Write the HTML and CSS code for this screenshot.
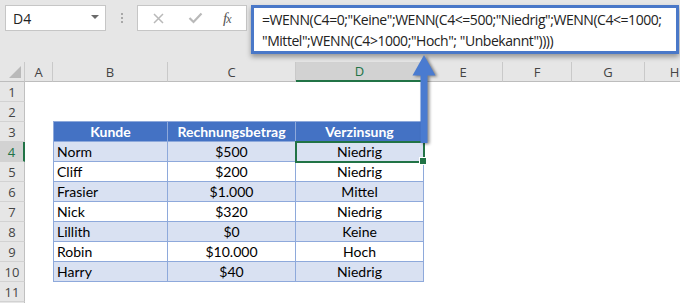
FILE: index.html
```html
<!DOCTYPE html>
<html lang="de">
<head>
<meta charset="utf-8">
<title>WENN verschachtelt</title>
<link rel="stylesheet" href="styles.css">
</head>
<body>
<div class="app">
  <div class="toolbar">
    <div class="namebox"><span class="ref">D4</span><span class="caret"></span></div>
    <div class="grip"><i></i><i></i><i></i></div>
    <div class="fxbox">
      <svg class="ico-x" width="11" height="11" viewBox="0 0 11 11"><path d="M1 1L10 10M10 1L1 10" stroke="#b9b9b9" stroke-width="1.5" fill="none"/></svg>
      <svg class="ico-ok" width="15" height="12" viewBox="0 0 15 12"><path d="M1.5 6L5.5 10L13.5 1.5" stroke="#b9b9b9" stroke-width="2.2" fill="none"/></svg>
      <span class="fx">f<span class="fxx">x</span></span>
    </div>
    <div class="formula">=WENN(C4=0;"Keine";WENN(C4&lt;=500;"Niedrig";WENN(C4&lt;=1000;<br>"Mittel";WENN(C4&gt;1000;"Hoch"; "Unbekannt"))))</div>
  </div>
  <div class="sheet">
    <div class="ch corner"><span class="tri"></span></div><div class="ch">A</div><div class="ch">B</div><div class="ch">C</div><div class="ch sel">D</div><div class="ch">E</div><div class="ch">F</div><div class="ch">G</div><div class="ch">H</div>

    <div class="rh">1</div><div class="c"></div><div class="c"></div><div class="c"></div><div class="c"></div><div class="c"></div><div class="c"></div><div class="c"></div><div class="c"></div>

    <div class="rh">2</div><div class="c"></div><div class="c edge"></div><div class="c edge"></div><div class="c edge"></div><div class="c"></div><div class="c"></div><div class="c"></div><div class="c"></div>

    <div class="rh">3</div><div class="c"></div><div class="c th first">Kunde</div><div class="c th">Rechnungsbetrag</div><div class="c th">Verzinsung</div><div class="c"></div><div class="c"></div><div class="c"></div><div class="c"></div>

    <div class="rh sel">4</div><div class="c"></div><div class="c td band first left">Norm</div><div class="c td band">$500</div><div class="c td band active">Niedrig</div><div class="c"></div><div class="c"></div><div class="c"></div><div class="c"></div>

    <div class="rh">5</div><div class="c"></div><div class="c td first left">Cliff</div><div class="c td">$200</div><div class="c td">Niedrig</div><div class="c"></div><div class="c"></div><div class="c"></div><div class="c"></div>

    <div class="rh">6</div><div class="c"></div><div class="c td band first left">Frasier</div><div class="c td band">$1.000</div><div class="c td band">Mittel</div><div class="c"></div><div class="c"></div><div class="c"></div><div class="c"></div>

    <div class="rh">7</div><div class="c"></div><div class="c td first left">Nick</div><div class="c td">$320</div><div class="c td">Niedrig</div><div class="c"></div><div class="c"></div><div class="c"></div><div class="c"></div>

    <div class="rh">8</div><div class="c"></div><div class="c td band first left">Lillith</div><div class="c td band">$0</div><div class="c td band">Keine</div><div class="c"></div><div class="c"></div><div class="c"></div><div class="c"></div>

    <div class="rh">9</div><div class="c"></div><div class="c td first left">Robin</div><div class="c td">$10.000</div><div class="c td">Hoch</div><div class="c"></div><div class="c"></div><div class="c"></div><div class="c"></div>

    <div class="rh">10</div><div class="c"></div><div class="c td band first left">Harry</div><div class="c td band">$40</div><div class="c td band">Niedrig</div><div class="c"></div><div class="c"></div><div class="c"></div><div class="c"></div>

    <div class="rh">11</div><div class="c"></div><div class="c"></div><div class="c"></div><div class="c"></div><div class="c"></div><div class="c"></div><div class="c"></div><div class="c"></div>

    <div class="rh"></div><div class="c"></div><div class="c"></div><div class="c"></div><div class="c"></div><div class="c"></div><div class="c"></div><div class="c"></div><div class="c"></div>
  </div>
  <svg class="arrow" width="680" height="303" viewBox="0 0 680 303">
    <path class="arrow-shape" d="M424 55L435.5 75.5L427.5 75.5L427.5 143L420.5 143L420.5 75.5L412.5 75.5Z"/>
  </svg>
</div>
</body>
</html>
```

FILE: styles.css
```css
* { box-sizing: border-box; }
html, body { margin: 0; padding: 0; background: #ffffff; }
body { width: 680px; height: 303px; overflow: hidden; }

.app {
  position: relative;
  width: 680px;
  height: 303px;
  overflow: hidden;
  background: #ffffff;
}

/* ---------- toolbar / formula bar ---------- */
.toolbar {
  height: 62px;
  background: #e6e6e6;
  display: flex;
  align-items: flex-start;
  padding: 5px 0 0 5px;
  font-family: "Open Sans", "Noto Sans", sans-serif;
}
.namebox {
  width: 101px;
  height: 26px;
  background: #ffffff;
  border: 1px solid #c6c6c6;
  display: flex;
  align-items: center;
  justify-content: space-between;
  padding: 0 6px 0 7px;
}
.ref { font-size: 14px; color: #222222; }
.caret {
  width: 0; height: 0;
  border-left: 4px solid transparent;
  border-right: 4px solid transparent;
  border-top: 4px solid #6a6a6a;
  margin-top: -3px;
}
.grip {
  width: 31px;
  height: 26px;
  display: flex;
  flex-direction: column;
  align-items: center;
  justify-content: center;
  gap: 2px;
}
.grip i {
  display: block;
  width: 2px; height: 2px;
  background: #a8a8a8;
}
.fxbox {
  width: 110px;
  height: 26px;
  background: #ffffff;
  border: 1px solid #c6c6c6;
  display: flex;
  align-items: center;
  padding: 0 0 0 15px;
}
.ico-x { margin-right: 24px; }
.ico-ok { margin-right: 20px; }
.fx {
  font-family: "Liberation Serif", "DejaVu Serif", serif;
  font-style: italic;
  font-size: 15px;
  color: #555555;
  letter-spacing: -1px;
}
.fxx { font-size: 12px; }

.formula {
  margin-left: 4px;
  width: 428px;
  height: 49px;
  background: #ffffff;
  border: 3px solid #4a78c8;
  box-shadow: 0 3px 5px rgba(0, 0, 0, 0.35);
  padding: 1px 0 0 8px;
  font-size: 14px;
  letter-spacing: -0.45px;
  line-height: 21px;
  color: #222222;
  white-space: nowrap;
  overflow: hidden;
  position: relative;
  z-index: 2;
}

/* ---------- sheet grid ---------- */
.sheet {
  display: grid;
  grid-template-columns: 25px 28px 115px 128px 128px 79px 69px 73px 60px;
  grid-auto-rows: 20px;
  font-family: "Lato", "Open Sans", sans-serif;
}
.ch {
  background: #e6e6e6;
  border-right: 1px solid #c9c9c9;
  border-bottom: 1px solid #bdbdbd;
  display: flex;
  align-items: center;
  justify-content: center;
  font-family: "Open Sans", "Noto Sans", sans-serif;
  font-size: 13px;
  color: #444444;
}
.ch.sel {
  background: #d2d2d2;
  color: #217346;
  border-bottom: 2px solid #217346;
}
.corner { justify-content: flex-end; align-items: flex-end; padding: 0 3px 3px 0; }
.tri {
  width: 0; height: 0;
  border-left: 12px solid transparent;
  border-bottom: 12px solid #b9b9b9;
}
.rh {
  background: #e6e6e6;
  border-right: 1px solid #c0c0c0;
  border-bottom: 1px solid #d2d2d2;
  display: flex;
  align-items: center;
  justify-content: center;
  font-family: "Open Sans", "Noto Sans", sans-serif;
  font-size: 13px;
  color: #444444;
}
.rh.sel {
  background: #d2d2d2;
  color: #217346;
  border-right: 2px solid #217346;
}
.c {
  background: #ffffff;
  display: flex;
  align-items: center;
  justify-content: center;
  font-size: 14px;
  color: #000000;
  white-space: nowrap;
}
.c.edge { border-bottom: 1px solid #8ea9db; }
.c.th {
  background: #4472c4;
  color: #ffffff;
  font-weight: 700;
  border-right: 1px solid #8ea9db;
  border-bottom: 1px solid #8ea9db;
}
.c.td {
  border-right: 1px solid #8ea9db;
  border-bottom: 1px solid #8ea9db;
}
.c.first { border-left: 1px solid #8ea9db; }
.c.band { background: #d9e1f2; }
.c.left { justify-content: flex-start; padding-left: 3px; }
.c.active { position: relative; }
.c.active::after {
  content: "";
  position: absolute;
  top: -1px; left: -1px; right: -2px; bottom: -2px;
  border: 2px solid #217346;
}
.c.active::before {
  content: "";
  position: absolute;
  right: -4px; bottom: -4px;
  width: 6px; height: 6px;
  background: #217346;
  border: 1px solid #ffffff;
  z-index: 1;
}

/* ---------- callout arrow ---------- */
.arrow {
  position: absolute;
  left: 0; top: 0;
  pointer-events: none;
  z-index: 3;
}
.arrow-shape {
  fill: #4a7bd0;
  filter: drop-shadow(2px 1px 1.5px rgba(0, 0, 0, 0.45));
}
```
